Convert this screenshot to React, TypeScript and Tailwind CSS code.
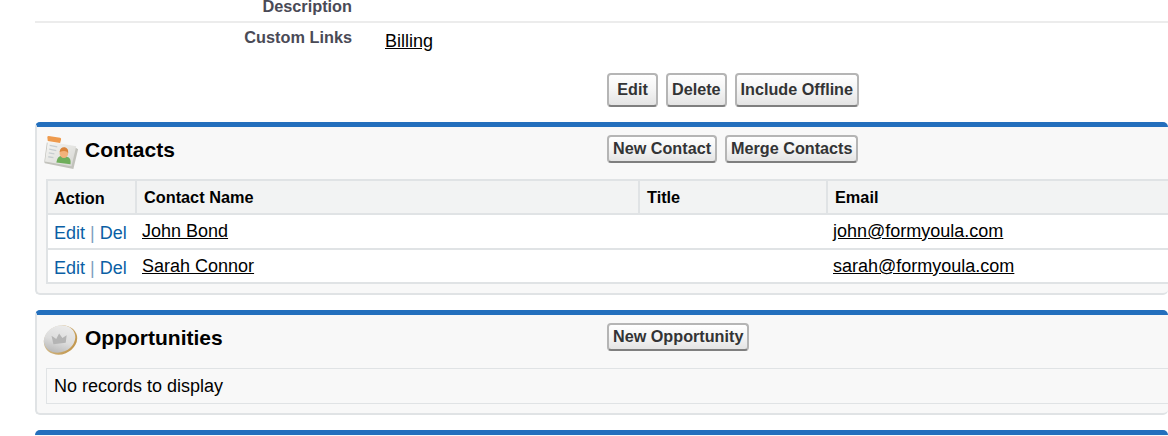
import React from 'react';

const ContactsIcon = () => (
  <svg width="36" height="36" viewBox="0 0 38 38" className="shrink-0 blur-[0.5px]">
    <defs>
      <linearGradient id="card" x1="0" y1="0" x2="1" y2="1">
        <stop offset="0" stopColor="#f6f6f4" />
        <stop offset="1" stopColor="#d6d6d2" />
      </linearGradient>
    </defs>
    <path d="M3 9 L31 13 L36 16 L31 37 L1 31 Q0 30 0.5 28 Z" fill="#c2c2bc" />
    <path d="M4 8 L34 13 L29 34 L1 29 Z" fill="url(#card)" />
    <path d="M5 2 L17 4 Q18.5 4.5 18 6 L17 9.5 L4 7.5 L3.5 3.5 Q3.5 2 5 2 Z" fill="#ee9a4d" />
    <path d="M6 12 L14 13.5 M5.5 16 L13 17.5 M5 20 L11 21 M4.5 24 L10 25" stroke="#c7cdd0" strokeWidth="1.4" />
    <path d="M13 30 Q14 23 19 23 L24 24 Q29 25 28 32 Z" fill="#6fae5b" />
    <ellipse cx="21" cy="20" rx="4.6" ry="5.4" fill="#f2b27a" />
    <path d="M16.5 19 Q17 13.5 22 14 Q26 15 25.5 20 Q23 16.5 16.5 19 Z" fill="#d9833a" />
  </svg>
);

const CoinIcon = () => (
  <svg width="35" height="32" viewBox="1 2 37 33" className="shrink-0 blur-[0.5px]">
    <defs>
      <linearGradient id="silver" x1="0" y1="1" x2="1" y2="0">
        <stop offset="0" stopColor="#a9a9a9" />
        <stop offset="0.45" stopColor="#dcdcdc" />
        <stop offset="1" stopColor="#f0f0f0" />
      </linearGradient>
      <linearGradient id="rim" x1="0" y1="0" x2="1" y2="1">
        <stop offset="0" stopColor="#d8c9a6" />
        <stop offset="1" stopColor="#bf8f3f" />
      </linearGradient>
    </defs>
    <ellipse cx="19.5" cy="18.5" rx="18" ry="15" transform="rotate(-22 19.5 18.5)" fill="url(#rim)" />
    <ellipse cx="18.5" cy="17.5" rx="17" ry="14" transform="rotate(-22 18.5 17.5)" fill="url(#silver)" />
    <path d="M12 23 L10 14 L15 17.5 L18 11.5 L21.5 16.5 L26 13.5 L25 21.5 Z" fill="#b4b4b4" />
  </svg>
);

const Btn = ({ children, wide, className = '' }: { children: React.ReactNode; wide?: boolean; className?: string }) => (
  <button
    className={`rounded-[4px] border-2 border-[#b5b5b5] border-b-[#7f7f7f] bg-gradient-to-b from-[#ffffff] via-[#f4f4f4] to-[#e4e4e4] px-[4px] pb-[1px] font-bold text-[16.2px] leading-none text-[#333435] ${
      wide ? 'h-[34px]' : 'h-[28px]'
    } ${className}`}
  >
    {children}
  </button>
);

const contacts = [
  { name: 'John Bond', email: 'john@formyoula.com', rowClass: 'h-[35px]' },
  { name: 'Sarah Connor', email: 'sarah@formyoula.com', rowClass: 'h-[34px]' },
];

const RelatedPanel = ({ children }: { children: React.ReactNode }) => (
  <div className="rounded-[5px] border-2 border-t-[5px] border-[#e0e3e5] border-t-[#236fbd] border-r-0 bg-[#f8f8f8]">
    {children}
  </div>
);

export default function App() {
  return (
    <div className="h-[436px] w-[1168px] overflow-hidden bg-white pl-[35px] font-['Liberation_Sans',Arial,sans-serif]">
      {/* Detail rows */}
      <div className="flex h-[23px] items-end">
        <div className="h-[23px] w-[332px] border-b-2 border-[#ececec] pr-[15px] text-right text-[16.3px] font-bold leading-[12px] text-[#4a4a56]">
          Description
        </div>
        <div className="h-[24px] flex-1 border-b-2 border-[#ececec]" />
      </div>
      <div className="flex h-[36px]">
        <div className="w-[332px] pr-[15px] pt-[5px] text-right text-[16.3px] font-bold leading-[18px] text-[#4a4a56]">
          Custom Links
        </div>
        <div className="pl-[18px] pt-[8px] text-[18px] leading-[20px] text-black underline">
          Billing
        </div>
      </div>

      {/* Page buttons */}
      <div className="mt-[14px] flex gap-[8px] pl-[572px]">
        <Btn wide className="min-w-[51px]">Edit</Btn>
        <Btn wide>Delete</Btn>
        <Btn wide>Include Offline</Btn>
      </div>

      {/* Contacts */}
      <div className="mt-[15px]">
        <RelatedPanel>
          <div className="flex h-[52px]">
            <div className="mt-[7px] flex h-[36px] w-[570px] items-center gap-[5px] pl-[7px]">
              <ContactsIcon />
              <h3 className="pb-[4px] text-[21px] font-bold text-black">Contacts</h3>
            </div>
            <div className="flex items-start gap-[8px] pt-[8px]">
              <Btn>New Contact</Btn>
              <Btn>Merge Contacts</Btn>
            </div>
          </div>
          <div className="mb-[9px] ml-[9px] border-2 border-r-0 border-[#e0e3e5] bg-white">
            <div className="grid h-[32px] grid-cols-[89px_503px_188px_1fr] bg-[#f2f3f3] text-[16.3px] font-bold text-black">
              <div className="flex items-center border-r-2 border-[#e0e3e5] pl-[6px] pt-[2px]">Action</div>
              <div className="flex items-center border-r-2 border-[#e0e3e5] pl-[7px]">Contact Name</div>
              <div className="flex items-center border-r-2 border-[#e0e3e5] pl-[7px]">Title</div>
              <div className="flex items-center pl-[7px]">Email</div>
            </div>
            {contacts.map((c) => (
              <div
                key={c.name}
                className={`grid grid-cols-[89px_503px_188px_1fr] border-t-2 border-[#e0e3e5] text-[18px] leading-[20px] ${c.rowClass}`}
              >
                <div className="pl-[6px] pt-[8px] text-[#0b5fa5]">
                  Edit <span className="text-[#7f9fbf]">|</span> Del
                </div>
                <div className="pl-[5px] pt-[6px] text-black underline">{c.name}</div>
                <div />
                <div className="pl-[5px] pt-[6px] text-black underline">{c.email}</div>
              </div>
            ))}
          </div>
        </RelatedPanel>
      </div>

      {/* Opportunities */}
      <div className="mt-[15px]">
        <RelatedPanel>
          <div className="flex h-[53px]">
            <div className="mt-[9px] flex h-[32px] w-[570px] items-center gap-[7px] pl-[6px]">
              <CoinIcon />
              <h3 className="pb-[4px] text-[21px] font-bold text-black">Opportunities</h3>
            </div>
            <div className="pt-[8px]">
              <Btn>New Opportunity</Btn>
            </div>
          </div>
          <div className="mb-[9px] ml-[9px] h-[36px] border border-r-0 border-[#e0e3e5] pl-[7px] pt-[7px] text-[18px] leading-[20px] text-black">
            No records to display
          </div>
        </RelatedPanel>
      </div>

      {/* Next panel, cut off by the window */}
      <div className="mt-[15px] h-[10px] rounded-t-[5px] border-t-[5px] border-[#236fbd] bg-[#f8f8f8]" />
    </div>
  );
}
